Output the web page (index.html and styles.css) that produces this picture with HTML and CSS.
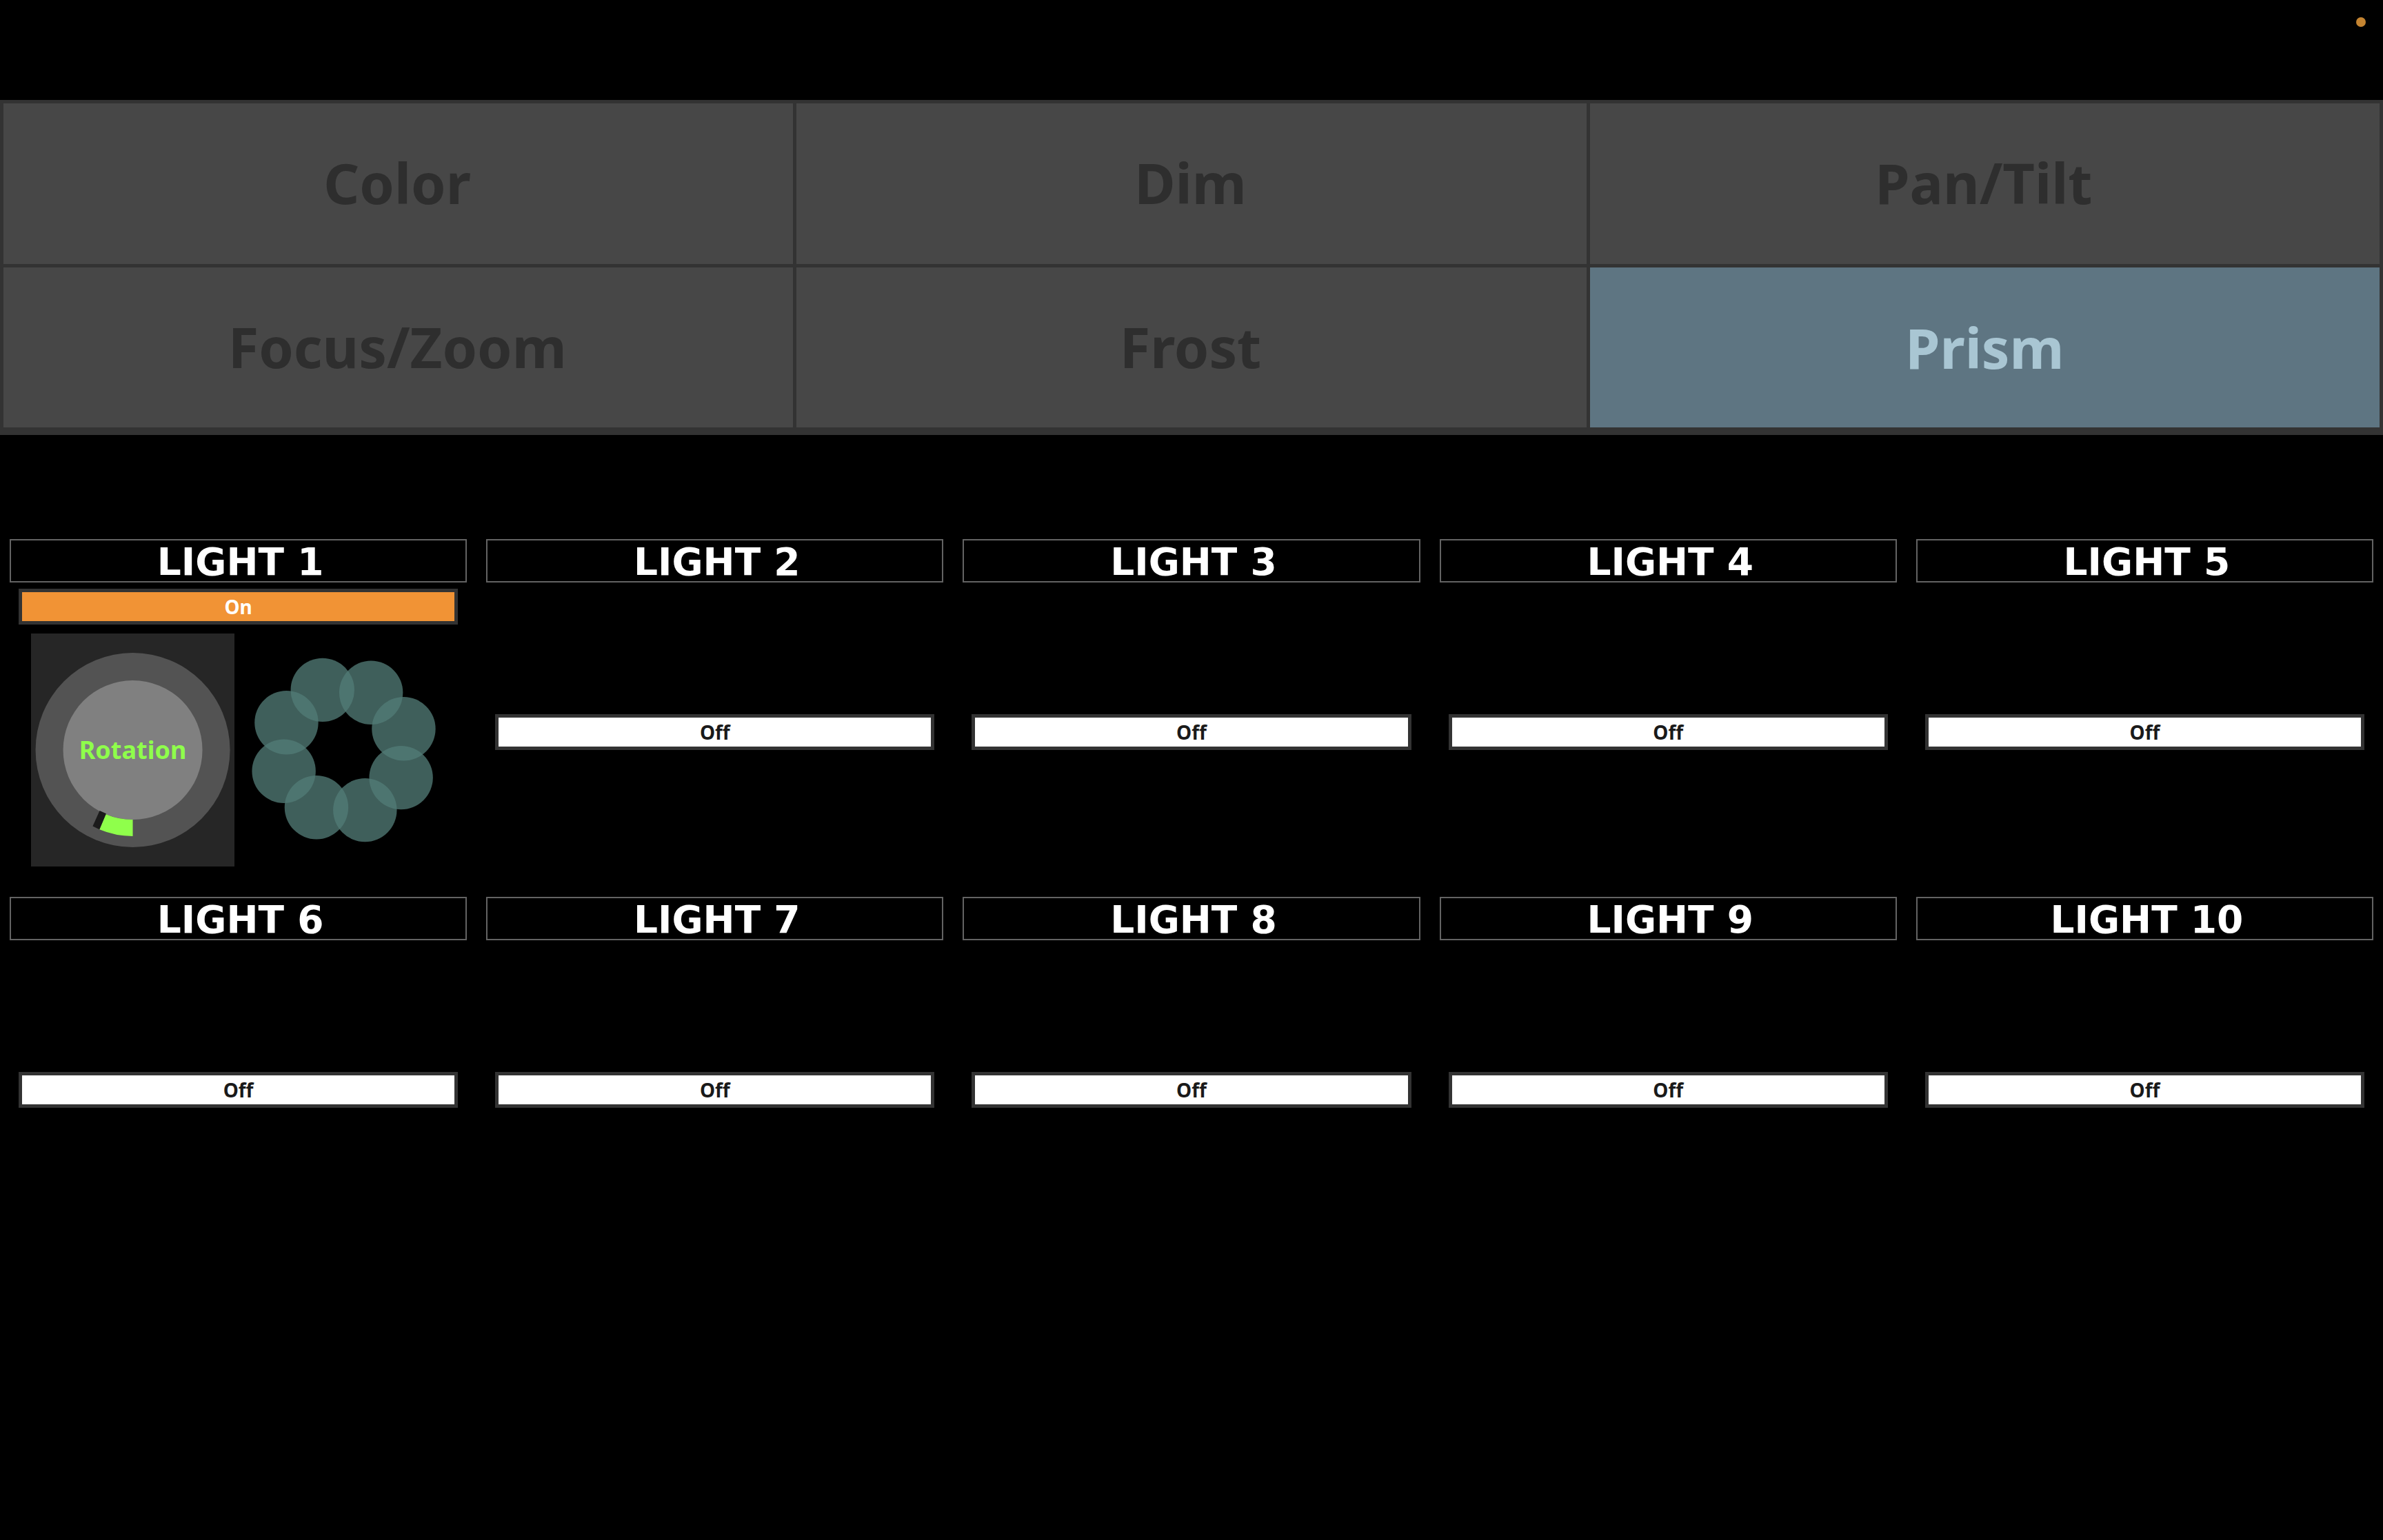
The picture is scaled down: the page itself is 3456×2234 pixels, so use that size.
FILE: index.html
```html
<!DOCTYPE html>
<html lang="en">
<head>
<meta charset="utf-8">
<meta name="viewport" content="width=device-width, initial-scale=1">
<title>Prism</title>
<link rel="stylesheet" href="styles.css">
</head>
<body>
<header class="status-bar"><span class="status-dot"></span></header>
<nav class="tabs">
  <button class="tab" type="button">Color</button>
  <button class="tab" type="button">Dim</button>
  <button class="tab" type="button">Pan/Tilt</button>
  <button class="tab" type="button">Focus/Zoom</button>
  <button class="tab" type="button">Frost</button>
  <button class="tab tab-active" type="button" aria-current="page">Prism</button>
</nav>
<main class="lights">
  <section class="light">
    <h2 class="light-title">LIGHT 1</h2>
    <div class="light-body light-body-on">
      <button class="toggle toggle-on" type="button" aria-pressed="true">On</button>
      <div class="prism">
        <div class="knob">
          <svg class="knob-dial" viewBox="0 0 295 338" aria-hidden="true">
            <circle cx="147.5" cy="169" r="141" fill="#535353"/>
            <circle cx="147.5" cy="169" r="101" fill="#808080"/>
            <path d="M147.5 270A101 101 0 0 1 108.5 262.2L99.2 284.3A125 125 0 0 0 147.5 294Z" fill="#8fff4b"/>
            <path d="M108.9 261.3L99.5 257L89.4 279.4L99.2 284.3Z" fill="#1b1b1b"/>
          </svg>
          <label class="knob-label" for="rotation-1">Rotation</label>
          <input class="knob-input" id="rotation-1" type="range" min="0" max="360" value="23">
        </div>
        <svg class="petals" viewBox="0 0 295 338" aria-hidden="true">
          <g fill="#527b76" fill-opacity="0.77">
            <circle cx="116.7" cy="81.9" r="46.2"/>
            <circle cx="187.1" cy="85.8" r="46.2"/>
            <circle cx="234.4" cy="138.3" r="46.2"/>
            <circle cx="230.6" cy="209.1" r="46.2"/>
            <circle cx="178.3" cy="256.1" r="46.2"/>
            <circle cx="107.9" cy="252.2" r="46.2"/>
            <circle cx="60.6" cy="199.7" r="46.2"/>
            <circle cx="64.4" cy="129.3" r="46.2"/>
          </g>
        </svg>
      </div>
    </div>
  </section>
  <section class="light">
    <h2 class="light-title">LIGHT 2</h2>
    <div class="light-body"><button class="toggle" type="button" aria-pressed="false">Off</button></div>
  </section>
  <section class="light">
    <h2 class="light-title">LIGHT 3</h2>
    <div class="light-body"><button class="toggle" type="button" aria-pressed="false">Off</button></div>
  </section>
  <section class="light">
    <h2 class="light-title">LIGHT 4</h2>
    <div class="light-body"><button class="toggle" type="button" aria-pressed="false">Off</button></div>
  </section>
  <section class="light">
    <h2 class="light-title">LIGHT 5</h2>
    <div class="light-body"><button class="toggle" type="button" aria-pressed="false">Off</button></div>
  </section>
  <section class="light">
    <h2 class="light-title">LIGHT 6</h2>
    <div class="light-body"><button class="toggle" type="button" aria-pressed="false">Off</button></div>
  </section>
  <section class="light">
    <h2 class="light-title">LIGHT 7</h2>
    <div class="light-body"><button class="toggle" type="button" aria-pressed="false">Off</button></div>
  </section>
  <section class="light">
    <h2 class="light-title">LIGHT 8</h2>
    <div class="light-body"><button class="toggle" type="button" aria-pressed="false">Off</button></div>
  </section>
  <section class="light">
    <h2 class="light-title">LIGHT 9</h2>
    <div class="light-body"><button class="toggle" type="button" aria-pressed="false">Off</button></div>
  </section>
  <section class="light">
    <h2 class="light-title">LIGHT 10</h2>
    <div class="light-body"><button class="toggle" type="button" aria-pressed="false">Off</button></div>
  </section>
</main>
</body>
</html>
```
FILE: styles.css
```css
* {
  box-sizing: border-box;
}

body {
  margin: 0;
  background: #000;
  color: #fff;
  font-family: "Noto Sans", "Open Sans", sans-serif;
}

button {
  margin: 0;
  padding: 0;
  border: 0;
  border-radius: 0;
  font-family: inherit;
  font-weight: 700;
  cursor: pointer;
}

.status-bar {
  display: flex;
  justify-content: flex-end;
  height: 145px;
  padding: 25px;
}

.status-dot {
  width: 14px;
  height: 14px;
  border-radius: 50%;
  background: #c48431;
}

.tabs {
  display: grid;
  grid-template-columns: repeat(3, 1fr);
  grid-template-rows: 233px 232px;
  gap: 5px;
  padding: 5px 5px 11px;
  background: #333;
}

.tab {
  padding: 0 3px 3px 0;
  background: #474747;
  color: #2e2e2e;
  font-size: 81px;
  line-height: 112px;
}

.tab-active {
  padding: 0;
  background: #5e7582;
  color: #a9c6d3;
}

.lights {
  display: grid;
  grid-template-columns: repeat(5, 1fr);
  grid-auto-rows: 1fr;
  row-gap: 22px;
  padding-top: 151px;
}

.light {
  display: flex;
  flex-direction: column;
  padding: 0 14px;
}

.light-title {
  margin: 0;
  padding: 3px 0 0 6px;
  border: 2px solid #636363;
  font-family: Verdana, "DejaVu Sans", sans-serif;
  font-size: 55px;
  font-weight: 700;
  line-height: 56px;
  text-align: center;
}

.light-body {
  display: flex;
  flex: 1;
  flex-direction: column;
  justify-content: center;
  gap: 13px;
  padding: 0 13px;
}

.light-body-on {
  padding-top: 9px;
  padding-bottom: 22px;
}

.toggle {
  border: 5px solid #333;
  background: #fff;
  color: #1a1a1a;
  font-size: 28px;
  line-height: 42px;
}

.toggle-on {
  background: #f19335;
  color: #fff;
}

.prism {
  display: grid;
  grid-template-columns: 1fr 1fr;
  gap: 11px;
  padding: 0 18px;
}

.knob {
  display: grid;
  place-items: center;
  position: relative;
  background: #262626;
}

.knob-dial,
.petals {
  display: block;
  width: 100%;
  height: 338px;
}

.knob-dial,
.knob-label {
  grid-area: 1 / 1;
}

.knob-label {
  z-index: 1;
  color: #8fff4b;
  font-size: 36px;
  font-weight: 700;
  line-height: 48px;
}

.knob-input {
  position: absolute;
  inset: 0;
  z-index: 2;
  width: 100%;
  height: 100%;
  margin: 0;
  opacity: 0;
  cursor: pointer;
}
```
